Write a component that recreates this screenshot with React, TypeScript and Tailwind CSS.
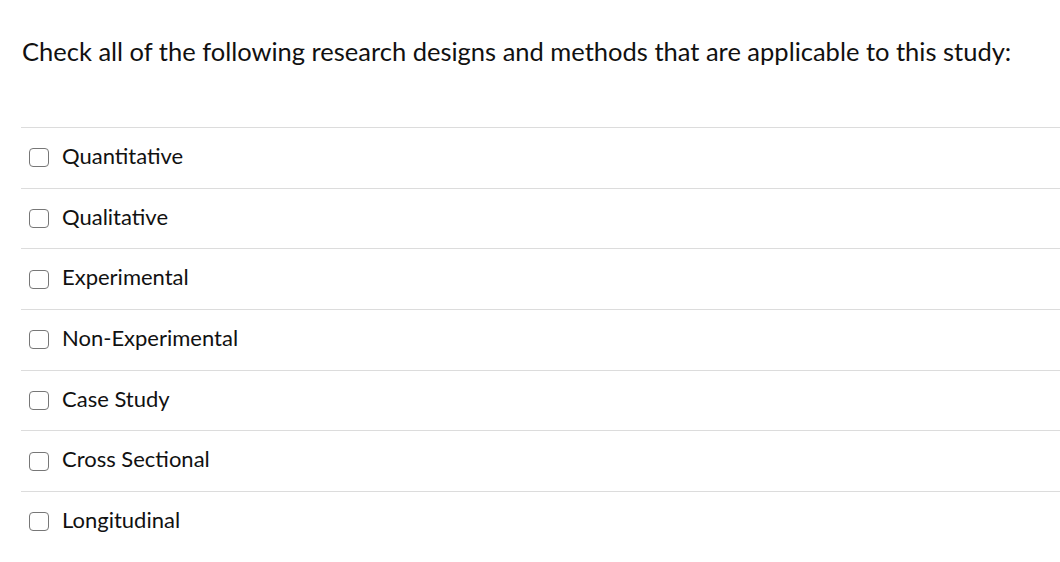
const options = [
  'Quantitative',
  'Qualitative',
  'Experimental',
  'Non-Experimental',
  'Case Study',
  'Cross Sectional',
  'Longitudinal',
];

export default function App() {
  return (
    <div className="w-[1060px] h-[562px] bg-white text-[#111] font-['Lato',sans-serif] overflow-hidden">
      <h1 className="pl-[22px] pt-[35px] text-[25.5px] leading-[32px] font-normal">
        Check all of the following research designs and methods that are applicable to this study:
      </h1>
      <ul className="ml-[21px] mt-[60px]">
        {options.map((o) => (
          <li key={o} className="border-t border-[#dcdcdc] h-[60.7px] flex items-center pl-[8px]">
            <span className="w-[20px] h-[19px] border-[1.5px] border-[#777] rounded-[4px] bg-white" />
            <span className="ml-[13px] text-[22px] leading-[28px] -mt-[4px]">{o}</span>
          </li>
        ))}
      </ul>
    </div>
  );
}
